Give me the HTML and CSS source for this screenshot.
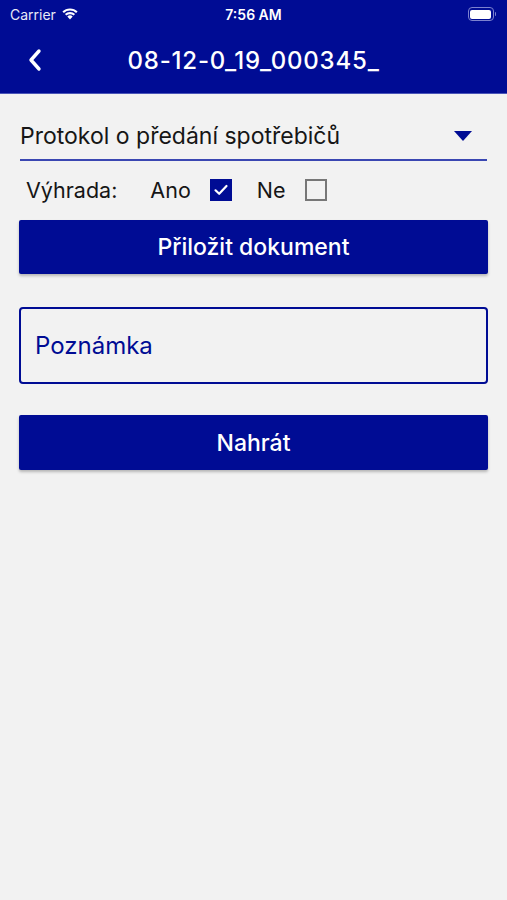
FILE: index.html
```html
<!DOCTYPE html>
<html lang="cs">

<head>
    <meta charset="UTF-8">
    <meta name="viewport" content="width=device-width, initial-scale=1.0">
    <title>Nahrát dokument</title>
    <link rel="stylesheet" href="styles.css">
</head>

<body>
    <div id="header">
        <div class="statusbar">
            <div class="carrier">
                Carrier
                <svg class="wifi" width="18" height="13" viewBox="0 0 18 13">
                    <path d="M9 12.5 L6.3 9.6 A3.9 3.9 0 0 1 11.7 9.6 Z" fill="#fff" />
                    <path d="M3.9 7.1 A7.3 7.3 0 0 1 14.1 7.1 L12.6 8.6 A5.2 5.2 0 0 0 5.4 8.6 Z" fill="#fff" />
                    <path d="M1.4 4.6 A10.8 10.8 0 0 1 16.6 4.6 L15.1 6.1 A8.7 8.7 0 0 0 2.9 6.1 Z" fill="#fff" />
                </svg>
            </div>
            <div class="clock">7:56 AM</div>
            <div class="battery">
                <span class="battery_body"><span class="battery_fill"></span></span>
                <span class="battery_cap"></span>
            </div>
        </div>
        <div class="navbar">
            <svg class="back" width="16" height="24" viewBox="0 0 16 24">
                <path d="M12 3 L4 12 L12 21" fill="none" stroke="#fff" stroke-width="3.4" stroke-linecap="round" stroke-linejoin="round" />
            </svg>
            <div class="title">08-12-0_19_000345_</div>
        </div>
    </div>

    <div id="main">
        <div class="picker">
            <span>Protokol o předání spotřebičů</span>
            <span class="caret"></span>
        </div>

        <div class="reservation">
            <span class="label">Výhrada:</span>
            <span class="option">Ano</span>
            <span class="checkbox checked">
                <svg width="18" height="18" viewBox="0 0 18 18">
                    <path d="M3.5 9.3 L7.2 12.8 L14.5 5" fill="none" stroke="#fff" stroke-width="2.2" stroke-linecap="round" stroke-linejoin="round" />
                </svg>
            </span>
            <span class="option">Ne</span>
            <span class="checkbox"></span>
        </div>

        <div class="button">Přiložit dokument</div>

        <div class="note">Poznámka</div>

        <div class="button">Nahrát</div>
    </div>
</body>

</html>
```

FILE: styles.css
```css
body {
    margin: 0;
    background-color: #f2f2f2;
    font-family: Inter, "Noto Sans", sans-serif;
    width: 507px;
    height: 900px;
}

#header {
    background-color: #000c94;
    color: #fff;
    height: 93px;
    border-bottom: 1px solid #4a55b8;
}

.statusbar {
    height: 28px;
    display: grid;
    grid-template-columns: 1fr auto 1fr;
    align-items: center;
    padding: 0 10px;
    font-size: 14px;
}

.carrier {
    display: flex;
    align-items: center;
    gap: 5px;
    color: #e8e9f6;
}

.wifi {
    margin-top: -2px;
}

.clock {
    font-weight: 600;
}

.battery {
    justify-self: end;
    display: flex;
    align-items: center;
    margin-right: 1px;
}

.battery_body {
    width: 21px;
    height: 9px;
    border: 1.5px solid #7c82cf;
    border-radius: 4px;
    padding: 1.5px;
    display: flex;
}

.battery_fill {
    flex: 1;
    background-color: #fff;
    border-radius: 2px;
}

.battery_cap {
    width: 1.5px;
    height: 4px;
    background-color: #7c82cf;
    border-radius: 0 1px 1px 0;
    margin-left: 1px;
}

.navbar {
    height: 65px;
    display: flex;
    align-items: center;
    position: relative;
}

.back {
    position: absolute;
    left: 27px;
    top: 20px;
}

.title {
    flex: 1;
    text-align: center;
    font-size: 24px;
    font-weight: 500;
    letter-spacing: 0.8px;
    padding-bottom: 1px;
}

#main {
    padding: 0 19px;
}

.picker {
    margin: 24px 1px 0 1px;
    height: 43px;
    border-bottom: 2px solid #3a47b2;
    display: flex;
    justify-content: space-between;
    align-items: center;
    font-size: 23px;
    color: #161616;
    padding-bottom: 5px;
    box-sizing: border-box;
}

.caret {
    width: 0;
    height: 0;
    border-left: 9px solid transparent;
    border-right: 9px solid transparent;
    border-top: 10px solid #000c94;
    margin-right: 15px;
}

.reservation {
    display: flex;
    align-items: center;
    height: 40px;
    margin-top: 9px;
    padding-left: 7px;
    font-size: 21.5px;
    color: #161616;
}

.label {
    margin-right: 33px;
}

.option {
    margin-right: 19px;
}

.checkbox {
    width: 22px;
    height: 22px;
    box-sizing: border-box;
    border: 2px solid #777;
    margin-right: 25px;
    display: flex;
    align-items: center;
    justify-content: center;
}

.checkbox.checked {
    background-color: #000c94;
    border-color: #000c94;
}

.button {
    height: 54px;
    background-color: #000c94;
    color: #fff;
    display: flex;
    align-items: center;
    justify-content: center;
    font-size: 23px;
    font-weight: 500;
    border-radius: 2px;
    box-shadow: 0 2px 3px rgba(0, 0, 0, 0.25);
    margin-top: 10px;
}

.note {
    margin-top: 33px;
    height: 77px;
    box-sizing: border-box;
    border: 2px solid #000c94;
    border-radius: 4px;
    display: flex;
    align-items: center;
    padding-left: 14px;
    font-size: 24px;
    color: #000c94;
    margin-bottom: 21px;
}

.note + .button {
    height: 55px;
    margin-top: 31px;
}
```
